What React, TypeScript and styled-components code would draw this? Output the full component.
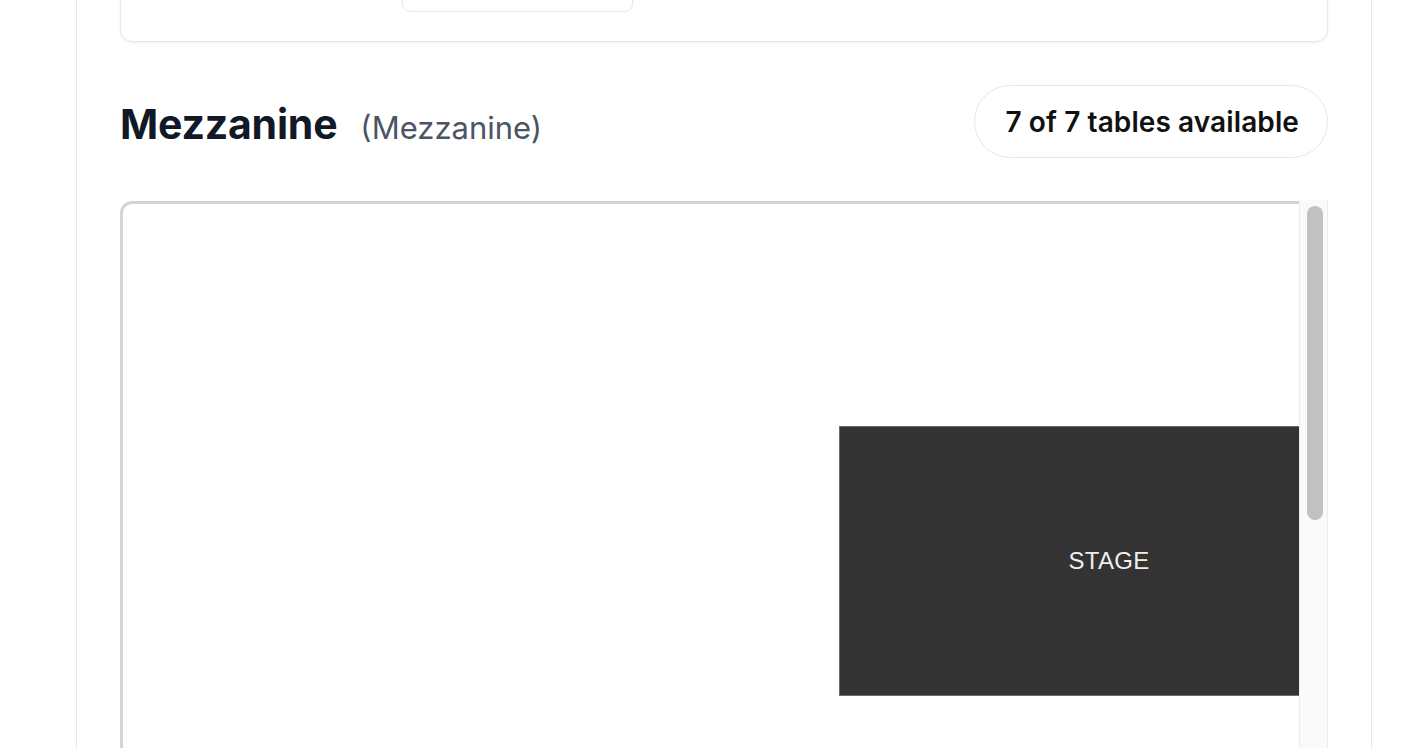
import React from "react";
import styled, { createGlobalStyle } from "styled-components";

const GlobalStyle = createGlobalStyle`
  html, body {
    margin: 0;
    padding: 0;
    background: #ffffff;
    overflow: hidden;
  }
  body {
    font-family: Inter, "Noto Sans", "Liberation Sans", sans-serif;
    color: #111827;
  }
  * { box-sizing: border-box; }
`;

const Page = styled.div`
  height: 748px;
  overflow: hidden;
  padding-left: 76px;
`;

const Panel = styled.main`
  width: 1296px;
  min-height: 900px;
  border-left: 1px solid #e5e7eb;
  border-right: 1px solid #e5e7eb;
  padding: 0 43px;
  background: #ffffff;
`;

const TopCard = styled.section`
  margin-top: -40px;
  height: 82px;
  border: 1px solid #e5e7eb;
  border-radius: 12px;
  box-shadow: 0 1px 3px rgba(0, 0, 0, 0.06);
  background: #ffffff;
  padding: 0 0 0 281px;
`;

const CardButton = styled.div`
  width: 231px;
  height: 51px;
  border: 1px solid #e5e7eb;
  border-radius: 8px;
  background: #ffffff;
`;

const SectionHeader = styled.header`
  display: flex;
  align-items: center;
  justify-content: space-between;
  margin-top: 43px;
`;

const TitleGroup = styled.div`
  display: flex;
  align-items: baseline;
  gap: 23px;
  padding-top: 6px;
`;

const Title = styled.h2`
  margin: 0;
  font-size: 41px;
  font-weight: 700;
  letter-spacing: -0.2px;
  color: #111827;
  line-height: 1.2;
`;

const Subtitle = styled.span`
  font-size: 31px;
  font-weight: 400;
  color: #4b5563;
`;

const Pill = styled.div`
  height: 73px;
  display: flex;
  align-items: center;
  padding: 0 28px 0 30px;
  border: 1px solid #e5e7eb;
  border-radius: 999px;
  font-size: 28px;
  font-weight: 600;
  letter-spacing: 0.1px;
  color: #111111;
  background: #ffffff;
`;

const ScrollFrame = styled.div`
  margin-top: 42px;
  display: flex;
  height: 700px;
`;

const Viewport = styled.div`
  flex: 1;
  overflow: hidden;
  padding-top: 1px;
`;

const Canvas = styled.div`
  position: relative;
  width: 1400px;
  height: 900px;
  border: 3px solid #d1d5db;
  border-radius: 12px;
  background: #ffffff;
`;

const Stage = styled.div`
  position: absolute;
  left: 716px;
  top: 222px;
  width: 540px;
  height: 270px;
  background: #333333;
  border: 1px solid #6b6b6b;
  display: flex;
  align-items: center;
  justify-content: center;
  color: #eeeeee;
  font-family: "Liberation Sans", Arial, sans-serif;
  font-size: 24px;
  letter-spacing: 0.3px;
`;

const Track = styled.div`
  width: 29px;
  flex-shrink: 0;
  background: #fafafa;
  border-left: 1px solid #ececec;
  border-right: 1px solid #ececec;
  padding: 6px 0 0 7px;
`;

const Thumb = styled.div`
  width: 16px;
  height: 314px;
  border-radius: 8px;
  background: #c1c1c1;
`;

export default function App() {
  return (
    <>
      <GlobalStyle />
      <Page>
        <Panel>
          <TopCard>
            <CardButton />
          </TopCard>
          <SectionHeader>
            <TitleGroup>
              <Title>Mezzanine</Title>
              <Subtitle>(Mezzanine)</Subtitle>
            </TitleGroup>
            <Pill>7 of 7 tables available</Pill>
          </SectionHeader>
          <ScrollFrame>
            <Viewport>
              <Canvas>
                <Stage>STAGE</Stage>
              </Canvas>
            </Viewport>
            <Track>
              <Thumb />
            </Track>
          </ScrollFrame>
        </Panel>
      </Page>
    </>
  );
}
